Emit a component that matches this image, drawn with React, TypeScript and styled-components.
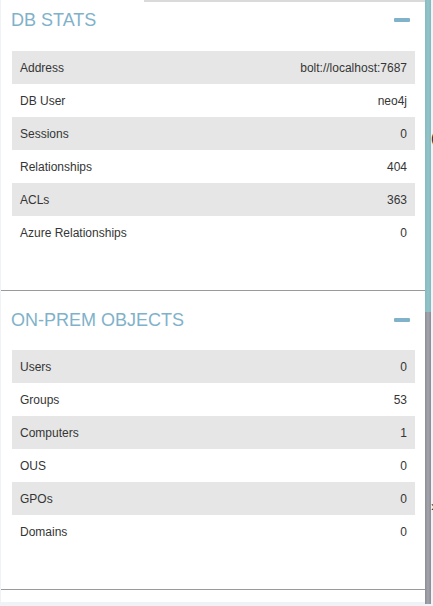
import React from "react";
import styled, { createGlobalStyle } from "styled-components";

const GlobalStyle = createGlobalStyle`
  html, body { margin: 0; padding: 0; }
  body {
    background: #eff3f7;
    font-family: "Liberation Sans", Arial, sans-serif;
  }
`;

const Page = styled.div`
  display: flex;
  width: 433px;
  height: 606px;
  overflow: hidden;
`;

const Panel = styled.div`
  margin-left: 1px;
  width: 424px;
  height: 602px;
  background: #ffffff;
  display: flex;
  flex-direction: column;
`;

const TopStrip = styled.div`
  height: 2px;
  margin-left: 143px;
  background: #dadada;
  flex-shrink: 0;
`;

const Section = styled.section<{ $bottom: number }>`
  border-bottom: 1px solid #9a9a9a;
  padding: 0 10px ${(p) => p.$bottom}px 11px;
`;

const Header = styled.div<{ $first?: boolean }>`
  display: flex;
  align-items: center;
  justify-content: space-between;
  height: 22px;
  margin-top: ${(p) => (p.$first ? 7 : 18)}px;
  margin-bottom: ${(p) => (p.$first ? 20 : 19)}px;
  margin-left: -1px;
  padding-right: 5px;
`;

const Title = styled.h2`
  margin: 0;
  font-size: 18px;
  line-height: 22px;
  font-weight: 400;
  color: #7fb2ca;
  letter-spacing: 0;
`;

const Minus = styled.button`
  width: 16px;
  height: 4px;
  padding: 0;
  border: none;
  border-radius: 1px;
  background: #80b3ca;
  cursor: pointer;
`;

const Table = styled.div`
  display: flex;
  flex-direction: column;
`;

const Row = styled.div<{ $shaded: boolean }>`
  display: flex;
  align-items: center;
  justify-content: space-between;
  height: 33px;
  padding: 0 8px;
  font-size: 12px;
  color: #353535;
  background: ${(p) => (p.$shaded ? "#e6e6e6" : "transparent")};
`;

const Scrollbar = styled.div`
  width: 6px;
  height: 604px;
  display: flex;
  flex-direction: column;
  flex-shrink: 0;
`;

const ThumbTop = styled.div`
  height: 312px;
  background: linear-gradient(to right, #86bac0, #92c4c8 50%, #86bac0);
`;

const ThumbRest = styled.div`
  flex: 1;
  background: linear-gradient(to right, #8c8c94, #a4a4ac 50%, #8c8c94);
`;

const Gutter = styled.div`
  width: 2px;
  overflow: hidden;
  display: flex;
  flex-direction: column;
  font-size: 14px;
  color: #222;
  line-height: 14px;
`;

const Peek = styled.span<{ $top: number }>`
  margin-top: ${(p) => p.$top}px;
  white-space: nowrap;
`;

type Stat = [string, string];

const dbStats: Stat[] = [
  ["Address", "bolt://localhost:7687"],
  ["DB User", "neo4j"],
  ["Sessions", "0"],
  ["Relationships", "404"],
  ["ACLs", "363"],
  ["Azure Relationships", "0"],
];

const onPrem: Stat[] = [
  ["Users", "0"],
  ["Groups", "53"],
  ["Computers", "1"],
  ["OUS", "0"],
  ["GPOs", "0"],
  ["Domains", "0"],
];

function StatSection({
  title,
  rows,
  first,
  bottom,
}: {
  title: string;
  rows: Stat[];
  first?: boolean;
  bottom: number;
}) {
  return (
    <Section $bottom={bottom}>
      <Header $first={first}>
        <Title>{title}</Title>
        <Minus aria-label="collapse" />
      </Header>
      <Table>
        {rows.map(([k, v], i) => (
          <Row key={k} $shaded={i % 2 === 0}>
            <span>{k}</span>
            <span>{v}</span>
          </Row>
        ))}
      </Table>
    </Section>
  );
}

export default function App() {
  return (
    <>
      <GlobalStyle />
      <Page>
        <Panel>
          <TopStrip />
          <StatSection title="DB STATS" rows={dbStats} first bottom={41} />
          <StatSection title="ON-PREM OBJECTS" rows={onPrem} bottom={41} />
        </Panel>
        <Scrollbar>
          <ThumbTop />
          <ThumbRest />
        </Scrollbar>
        <Gutter>
          <Peek $top={131}>(</Peek>
          <Peek $top={354}>›</Peek>
        </Gutter>
      </Page>
    </>
  );
}
